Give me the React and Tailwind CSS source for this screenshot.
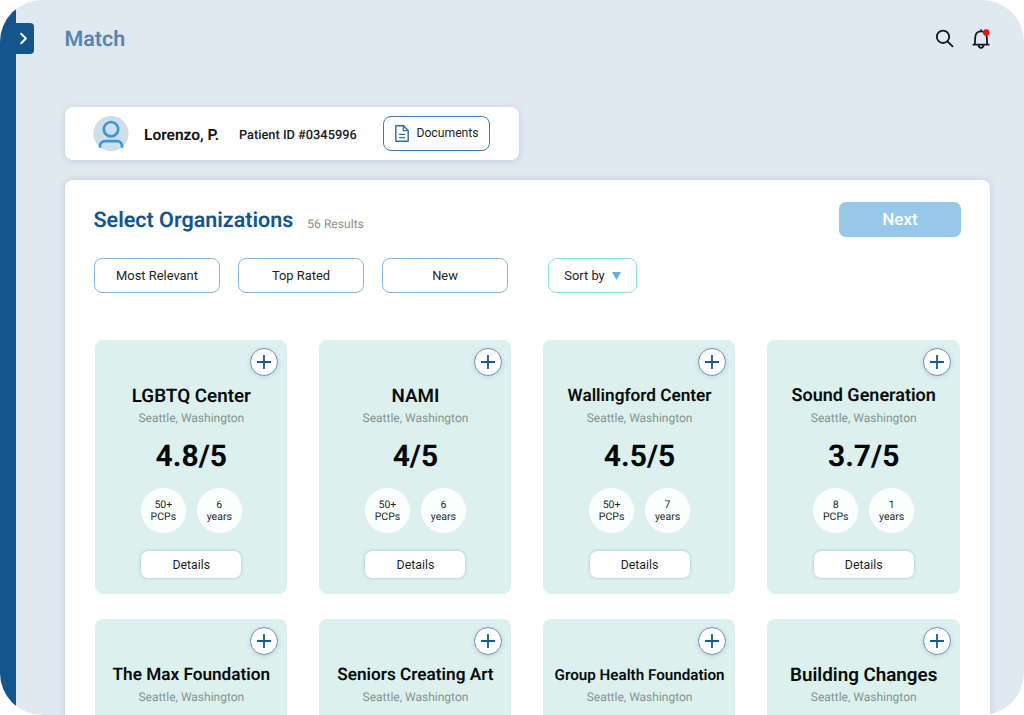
import { ChevronRight } from 'lucide-react';

const organizations = [
    { name: 'LGBTQ Center', rating: '4.8/5', pcps: '50+', years: '6', size: 'text-[18.8px]' },
    { name: 'NAMI', rating: '4/5', pcps: '50+', years: '6', size: 'text-[18.8px]' },
    { name: 'Wallingford Center', rating: '4.5/5', pcps: '50+', years: '7', size: 'text-[17.2px]' },
    { name: 'Sound Generation', rating: '3.7/5', pcps: '8', years: '1', size: 'text-[18px]' },
    { name: 'The Max Foundation', size: 'text-[17.2px]' },
    { name: 'Seniors Creating Art', size: 'text-[17.2px]' },
    { name: 'Group Health Foundation', size: 'text-[15.2px]' },
    { name: 'Building Changes', size: 'text-[18.8px]' },
];

const filters = ['Most Relevant', 'Top Rated', 'New'];

const SearchIcon = () => (
    <svg className="w-5 h-5" viewBox="0 0 20 20" fill="none" stroke="#16191d" strokeWidth="1.9">
        <circle cx="8" cy="7.8" r="6.2" />
        <path d="M12.5 12.3 18 17.8" />
    </svg>
);

const BellIcon = () => (
    <svg className="w-5 h-5" viewBox="0 0 20 20" fill="none" stroke="#16191d" strokeWidth="1.8">
        <path d="M1.6 15.7H18.4M3.8 15.7L4.2 8.4C4.4 4.8 6.6 2.4 10 2.4S15.6 4.8 15.8 8.4L16.2 15.7" />
        <path d="M10 2.4V.6" />
        <path d="M7.4 16.2C7.6 17.9 8.7 18.8 10 18.8S12.4 17.9 12.6 16.2" />
        <circle cx="15.2" cy="3.4" r="3.2" fill="#ff0808" stroke="none" />
    </svg>
);

const Avatar = () => (
    <svg className="w-[36px] h-[36px]" viewBox="0 0 36 36" fill="none" stroke="#3a97d3" strokeWidth="2.7">
        <circle cx="18" cy="17.5" r="17.6" fill="#cfdeeb" stroke="none" />
        <circle cx="18" cy="13.2" r="7.2" />
        <path d="M7 31.7V30.3C7 27.3 9 25.2 12 25.2H24C27 25.2 29 27.3 29 30.3V31.7" />
    </svg>
);

const DocumentIcon = () => (
    <svg className="w-[14px] h-[17px]" viewBox="0 0 14 17" fill="none" stroke="#2f6da6" strokeWidth="1.4" strokeLinejoin="round">
        <path d="M.8.8H8.6L13.2 5.4V16.2H.8Z" />
        <path d="M8.4.8V5.6H13.2M4 9.4H10M4 12.6H10" />
    </svg>
);

const OrganizationCard = ({ org }) => (
    <div className="flex flex-col items-center h-[254px] pt-2 pl-px rounded-lg bg-[#dcf0ee]">
        <button className="self-end mr-[9px] w-7 h-7 flex items-center justify-center rounded-full border border-[#6f93bb] bg-white shadow-[0_1px_4px_rgba(60,110,130,0.2)]">
            <svg className="w-3.5 h-3.5" viewBox="0 0 14 14" stroke="#175a91" strokeWidth="1.8">
                <path d="M7 0V14M0 7H14" />
            </svg>
        </button>
        <h3 className={`${org.size} mt-2 h-6 leading-6 font-semibold text-[#080c0c] whitespace-nowrap`}>{org.name}</h3>
        <p className="mt-0.5 text-[12px] leading-4 text-[#849492]">Seattle, Washington</p>
        {org.rating && (
            <>
                <p className="mt-[13px] text-[30px] leading-9 font-bold text-[#050808]">{org.rating}</p>
                <div className="mt-[13px] flex gap-[11px] text-[10.5px] leading-3 text-center text-[#1b1f1f]">
                    <div className="w-[45px] h-[45px] rounded-full bg-[#fafffe] flex flex-col justify-center">
                        <span>{org.pcps}</span>
                        <span>PCPs</span>
                    </div>
                    <div className="w-[45px] h-[45px] rounded-full bg-[#fafffe] flex flex-col justify-center">
                        <span>{org.years}</span>
                        <span>years</span>
                    </div>
                </div>
                <button className="mt-[18px] w-[100px] h-[27px] pt-px rounded-[7px] bg-white text-[12.3px] text-[#1b1f1f] shadow-[0_0_3px_rgba(60,150,145,0.5)]">
                    Details
                </button>
            </>
        )}
    </div>
);

const App = () => {
    return (
        <div className="h-screen bg-white overflow-hidden font-[Roboto,sans-serif] [text-rendering:geometricPrecision]">
            <div className="flex h-full rounded-[42px] bg-[#e0e8f1] overflow-hidden">
                <aside className="w-4 shrink-0 bg-[#14568b]" />
                <button className="mt-[23px] w-[18px] h-[31px] shrink-0 rounded-r-[4px] bg-[#14568b] text-white flex items-center justify-center">
                    <ChevronRight className="w-[19px] h-[19px] -ml-[3px] shrink-0" strokeWidth={2.4} />
                </button>

                <main className="flex-1 pl-[31px] pr-[34px] flex flex-col">
                    <header className="h-[107px] pt-[25px] flex items-start justify-between shrink-0">
                        <h1 className="-ml-[0.5px] text-[21.5px] leading-[30px] font-semibold text-[#5586b1]">Match</h1>
                        <div className="flex gap-4 pt-1 -mr-px">
                            <SearchIcon />
                            <BellIcon />
                        </div>
                    </header>

                    <section className="w-[454px] h-[53px] shrink-0 pl-7 pr-[29px] flex items-center rounded-lg bg-white shadow-[0_1px_6px_rgba(110,135,165,0.25)]">
                        <Avatar />
                        <span className="ml-[15px] mt-1 w-[75px] text-[15.5px] font-semibold text-[#101214] whitespace-nowrap">Lorenzo, P.</span>
                        <span className="ml-5 mt-[5px] text-[12.8px] font-medium text-[#17191b]">Patient ID #0345996</span>
                        <button className="ml-auto w-[107px] h-[35px] pl-px flex items-center justify-center gap-[7px] rounded-[8px] border-[1.5px] border-[#3f79ae] text-[12.2px] text-[#1d1f21]">
                            <DocumentIcon />
                            Documents
                        </button>
                    </section>

                    <section className="mt-5 flex-1 px-[29px] rounded-t-lg bg-white shadow-[0_0_7px_rgba(110,135,165,0.3)]">
                        <div className="pt-[22px] flex items-start">
                            <h2 className="mt-px -ml-[0.5px] text-[21.5px] leading-9 font-semibold text-[#14568b]">Select Organizations</h2>
                            <span className="ml-[14px] mt-3 text-[12.1px] leading-5 text-[#8e8e8e]">56 Results</span>
                            <button className="ml-auto w-[122px] h-[35px] rounded-[7px] bg-[#97c8e9] text-[17px] font-medium text-white">Next</button>
                        </div>

                        <div className="mt-[19px] flex gap-[18px]">
                            {filters.map((label) => (
                                <button key={label} className="w-[126px] h-[35px] rounded-[8px] border-[1.5px] border-[#7fb8e4] text-[12.9px] text-[#1d1f21]">
                                    {label}
                                </button>
                            ))}
                            <button className="ml-[22px] w-[89px] h-[35px] flex items-center justify-center gap-[7px] rounded-[8px] border-[1.5px] border-[#8be3e1] text-[12.9px] text-[#1d1f21]">
                                Sort by
                                <svg className="w-[9px] h-2" viewBox="0 0 9 8" fill="#66aee0">
                                    <path d="M0 0H9L4.5 8Z" />
                                </svg>
                            </button>
                        </div>

                        <div className="mt-[47px] pl-[0.5px] pr-[1.5px] grid grid-cols-4 gap-x-[31.5px] gap-y-[25px]">
                            {organizations.map((org) => (
                                <OrganizationCard key={org.name} org={org} />
                            ))}
                        </div>
                    </section>
                </main>
            </div>
        </div>
    );
};

export default App;
